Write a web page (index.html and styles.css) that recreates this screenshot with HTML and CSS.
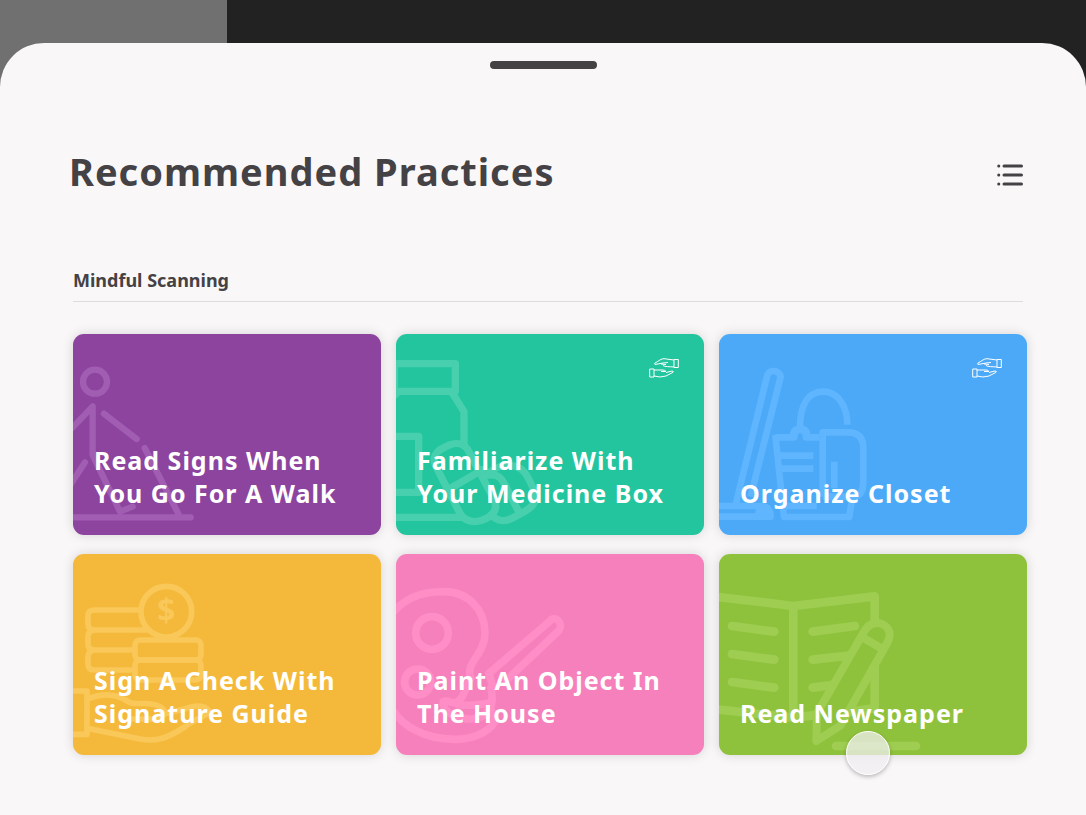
FILE: index.html
```html
<!DOCTYPE html>
<html lang="en">
    <head>
        <meta charset="utf-8">
        <meta name="viewport" content="width=device-width, initial-scale=1">
        <title>Recommended Practices</title>
        <link rel="stylesheet" href="styles.css">
    </head>
    <body>
        <main class="sheet">
            <button type="button" class="handle" aria-label="Close"></button>

            <header class="sheet-header">
                <h1>Recommended Practices</h1>
                <button type="button" class="list-button" aria-label="List view">
                    <svg viewBox="0 0 26 22">
                        <path d="M7 2h17.500M7 11h17.500M7 20h17.500"/>
                        <path d="M1.700 2h.1M1.700 11h.1M1.700 20h.1"/>
                    </svg>
                </button>
            </header>

            <section class="practices">
                <h2>Mindful Scanning</h2>
                <ul class="cards">
                    <li>
                        <a href="#" class="card purple">
                            <svg class="art" viewBox="39 27 924 603" stroke-width="19">
                                <circle cx="105" cy="170" r="36"/>
                                <path d="M20 326L98 244V390L180 560L218 545M75 412L20 496M132 266L230 342M254 369L360 576M20 577H392"/>
                            </svg>
                            <span>Read Signs When<br>You Go For A Walk</span>
                        </a>
                    </li>
                    <li>
                        <a href="#" class="card teal">
                            <svg class="art" viewBox="30 27 924 603" stroke-width="22">
                                <path d="M10 116H208V199H10M25 116V199M10 224L31 206M200 206L234 260V360M10 334H98V502H10M10 577H230"/>
                                <path d="M150 425C137 398 150 380 170 370L190 360C215 350 237 358 248 379L325 525C335 550 324 568 302 580C270 598 237 590 222 565ZM190 492L290 434"/>
                                <path d="M303 450C330 420 375 412 405 432C420 442 437 478 447 504C454 528 438 548 418 558L380 579C352 594 330 585 316 570M312 450C342 448 350 465 362 490L398 560"/>
                            </svg>
                            <svg class="hands" viewBox="0 0 30 20">
                                <path d="M25 2L15 .7C12 .5 10 3 6 5Q5 6 6 6.500L14 5L19 4.500M14 7.500C16 9 20 8.500 25 9M12 6L17 6.500M25 1.500H29.300V9.500H25Z"/>
                                <path d="M5 12L14 12Q16 12 17 13.500H12M17 14.500L23 13Q25 13 24 14.300L17 18Q11 20 5 18M.7 11H5V19H.7Z"/>
                            </svg>
                            <span>Familiarize With<br>Your Medicine Box</span>
                        </a>
                    </li>
                    <li>
                        <a href="#" class="card blue">
                            <svg class="art" viewBox="27 27 924 603" stroke-width="20">
                                <path d="M78 535L172 150C179 132 207 135 212 155L122 515M20 543H150C172 544 182 555 182 575H20M137 555Q158 557 162 574"/>
                                <path d="M270 310C270 230 300 200 340 200C384 200 412 245 412 299"/>
                                <path d="M196 330L222 576H418L427 515M196 337H253C253 307 288 307 288 337H328"/>
                                <path d="M248 336Q250 311 270 311Q291 311 293 336"/>
                                <path d="M338 515V322H414Q460 322 460 370V470Q460 515 427 515H338M373 410V490M205 392H310M210 431H310M225 543H320"/>
                            </svg>
                            <svg class="hands" viewBox="0 0 30 20">
                                <path d="M25 2L15 .7C12 .5 10 3 6 5Q5 6 6 6.500L14 5L19 4.500M14 7.500C16 9 20 8.500 25 9M12 6L17 6.500M25 1.500H29.300V9.500H25Z"/>
                                <path d="M5 12L14 12Q16 12 17 13.500H12M17 14.500L23 13Q25 13 24 14.300L17 18Q11 20 5 18M.7 11H5V19H.7Z"/>
                            </svg>
                            <span>Organize Closet</span>
                        </a>
                    </li>
                    <li>
                        <a href="#" class="card yellow">
                            <svg class="art" viewBox="39 27 924 603" stroke-width="17">
                                <circle cx="319" cy="200" r="76"/>
                                <text x="319" y="232">$</text>
                                <path d="M242 195H104Q84 195 84 211V237Q84 255 104 255H258M104 255Q84 257 84 275V298Q84 315 104 315H218M104 315Q84 318 84 335V356Q84 375 104 375H218"/>
                                <rect x="225" y="285" width="198" height="60" rx="16"/>
                                <rect x="225" y="345" width="198" height="60" rx="16"/>
                                <path d="M20 438H81V568H20M88 460C140 440 177 452 205 470C230 484 270 465 302 486C324 502 312 520 286 522H207M300 510L370 493C397 482 430 478 445 495C450 512 405 520 374 546C315 584 286 590 240 582L88 551"/>
                            </svg>
                            <span>Sign A Check With<br>Signature Guide</span>
                        </a>
                    </li>
                    <li>
                        <a href="#" class="card pink">
                            <svg class="art" viewBox="33 27 924 603" stroke-width="23">
                                <circle cx="141" cy="264" r="49"/>
                                <circle cx="98" cy="411" r="39"/>
                                <path d="M10 220C52 160 106 140 177 140C250 140 300 194 300 264C300 330 240 350 257 400M10 472C44 545 120 583 211 583C274 583 330 550 330 520"/>
                                <path d="M312 385L493 230C512 208 537 235 521 257L365 405M312 385L322 420"/>
                                <path d="M257 400C235 430 245 450 218 470C202 480 188 462 175 470C170 495 211 525 260 522C310 520 330 480 318 430M220 480C258 482 278 482 310 475L330 520"/>
                            </svg>
                            <span>Paint An Object In<br>The House</span>
                        </a>
                    </li>
                    <li>
                        <a href="#" class="card green">
                            <svg class="art" viewBox="27 27 924 603" stroke-width="26">
                                <path d="M10 154L250 183L494 154V225M250 183V510M10 492L250 518L310 511M494 350V490L420 500"/>
                                <path d="M66 243L193 260M66 327L193 344M66 411L193 428M308 260L435 243M308 344L425 331M308 428L375 419M378 603H618"/>
                                <path class="pencil" d="M321 505L462 260C480 228 510 230 526 243C544 258 542 273 532 293L391 542L319 588ZM462 280L512 309" stroke-width="24"/>
                            </svg>
                            <span>Read Newspaper</span>
                        </a>
                        <div class="touch"></div>
                    </li>
                </ul>
            </section>
        </main>
    </body>
</html>
```
FILE: styles.css
```css
* {
    box-sizing: border-box;
}

body {
    margin: 0;
    min-height: 100vh;
    display: flex;
    flex-direction: column;
    padding-top: 43px;
    font-family: "Noto Sans", sans-serif;
    color: #444244;
    background: linear-gradient(to right, #707070 227px, #222222 227px);
}

button {
    border: none;
    padding: 0;
    cursor: pointer;
}

h1, h2 {
    margin: 0;
    font-weight: 700;
}

.sheet {
    flex: 1;
    display: flex;
    flex-direction: column;
    padding: 18px 59px 60px 69px;
    border-radius: 44px 44px 0 0;
    background: #f9f7f8;
}

.handle {
    align-self: center;
    width: 107px;
    height: 8px;
    margin-right: 10px;
    border-radius: 4px;
    background: #444244;
}

.sheet-header {
    display: flex;
    align-items: center;
    justify-content: space-between;
    margin-top: 75px;
    padding-right: 4px;
}

h1 {
    font-size: 38px;
    line-height: 54px;
    letter-spacing: 1px;
}

.list-button {
    width: 26px;
    height: 22px;
    margin-top: 8px;
    background: none;
}

.list-button svg {
    display: block;
    fill: none;
    stroke: #444244;
    stroke-width: 3;
    stroke-linecap: round;
}

.practices {
    margin: 68px 0 0 4px;
}

h2 {
    margin: 0 4px 32px 0;
    padding-bottom: 7px;
    border-bottom: 1px solid #dddbdd;
    font-size: 18px;
    line-height: 28px;
}

.cards {
    display: grid;
    grid-template-columns: repeat(3, 1fr);
    gap: 19px 15px;
    margin: 0;
    padding: 0;
    list-style: none;
}

.cards li {
    position: relative;
}

.card {
    position: relative;
    display: flex;
    align-items: flex-end;
    min-height: 201px;
    padding: 0 21px 25px;
    border-radius: 11px;
    overflow: hidden;
    color: #ffffff;
    font-size: 25px;
    line-height: 33px;
    font-weight: 700;
    letter-spacing: 1px;
    text-decoration: none;
    box-shadow: 0 0 12px rgba(0, 0, 0, 0.15);
}

.card span {
    position: relative;
}

.art {
    position: absolute;
    left: 0;
    bottom: 0;
    width: 308px;
    height: 201px;
    fill: none;
    stroke-linecap: round;
    stroke-linejoin: round;
}

.art text {
    font-size: 94px;
    font-weight: 700;
    letter-spacing: 0;
    text-anchor: middle;
    fill: #f9c859;
    stroke: none;
}

.hands {
    position: absolute;
    top: 24px;
    right: 25px;
    width: 30px;
    height: 20px;
    fill: none;
    stroke: #ffffff;
    stroke-width: 1;
    stroke-linejoin: round;
}

.purple {
    background: #8c449f;
    stroke: #a05db1;
}

.teal {
    background: #22c59e;
    stroke: #48d0ae;
}

.blue {
    background: #4ba9f7;
    stroke: #60b5ff;
}

.blue .art {
    stroke-linecap: butt;
}

.yellow {
    background: #f4b93b;
    stroke: #f9c859;
}

.pink {
    background: #f680bb;
    stroke: #ff8dc6;
}

.green {
    background: #8fc23c;
    stroke: #9fcd51;
}

.pencil {
    fill: #8fc23c;
}

/* touch point over the last card */
.touch {
    position: absolute;
    left: 127px;
    top: 177px;
    width: 44px;
    height: 44px;
    border: 1px solid #ffffff;
    border-radius: 50%;
    background: rgba(240, 238, 242, 0.75);
    box-shadow: 0 2px 4px rgba(0, 0, 0, 0.25);
}
```
